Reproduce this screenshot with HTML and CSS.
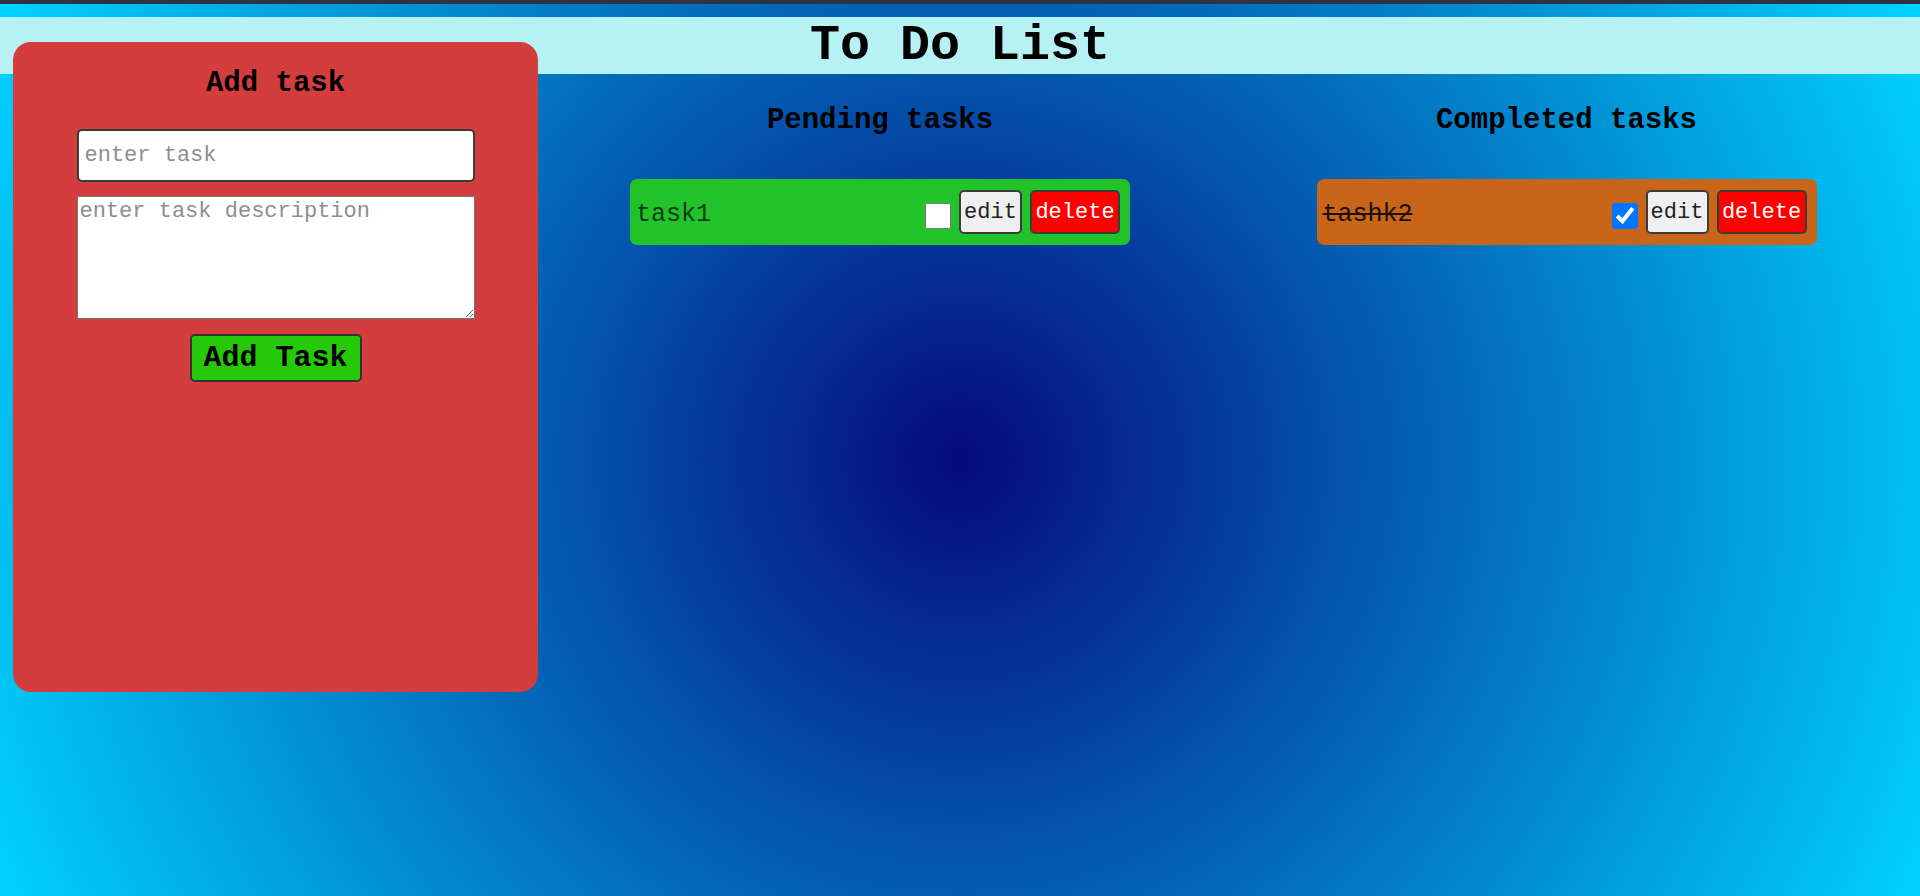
FILE: index.html
```html
<!DOCTYPE html>
<html lang="en">
<head>
<meta charset="utf-8">
<title>To Do List</title>
<link rel="stylesheet" href="styles.css">
</head>
<body>
<div class="topbar"></div>
<div class="app">
  <header class="title-bar">
    <h1 class="title">To Do List</h1>
  </header>
  <main class="board">
    <section class="add-panel">
      <h2 class="panel-title">Add task</h2>
      <input class="task-input" type="text" placeholder="enter task">
      <textarea class="task-desc" placeholder="enter task description"></textarea>
      <button class="add-btn" type="button">Add Task</button>
    </section>
    <section class="column">
      <h2 class="column-title">Pending tasks</h2>
      <div class="task-card pending">
        <span class="task-name">task1</span>
        <input class="task-check" type="checkbox">
        <button class="edit-btn" type="button">edit</button>
        <button class="delete-btn" type="button">delete</button>
      </div>
    </section>
    <section class="column">
      <h2 class="column-title">Completed tasks</h2>
      <div class="task-card completed">
        <span class="task-name done">tashk2</span>
        <input class="task-check" type="checkbox" checked>
        <button class="edit-btn" type="button">edit</button>
        <button class="delete-btn" type="button">delete</button>
      </div>
    </section>
  </main>
</div>
</body>
</html>
```
FILE: styles.css
```css
* { box-sizing: border-box; }

html, body {
  margin: 0;
  padding: 0;
  background: #2e3342;
  font-family: "Courier New", "Liberation Mono", monospace;
  overflow: hidden;
}

.topbar {
  height: 4px;
  background: #2e3342;
}

.app {
  height: 892px;
  padding-top: 13px;
  background: radial-gradient(circle farthest-corner at 960px 456px, #060a7c 0%, #00d4ff 100%);
}

.title-bar {
  height: 57px;
  background: #b6f2f4;
  display: flex;
  align-items: center;
  justify-content: center;
}

.title {
  margin: 0;
  font-size: 50px;
  line-height: 57px;
  font-weight: bold;
  color: #000;
}

.board {
  display: grid;
  grid-template-columns: 525px 684px 1fr;
  padding: 0 9px 0 13px;
  margin-top: -32px;
  position: relative;
}

.add-panel {
  height: 650px;
  background: #d43d3d;
  border-radius: 18px;
  padding-top: 25px;
  display: flex;
  flex-direction: column;
  align-items: center;
}

.panel-title,
.column-title {
  margin: 0;
  font-size: 29px;
  line-height: 33px;
  font-weight: bold;
  color: #000;
  text-align: center;
}

.task-input {
  margin-top: 29px;
  width: 398px;
  height: 53px;
  border: 2px solid #3a3a3a;
  border-radius: 5px;
  padding: 0 6px;
  font-family: inherit;
  font-size: 22px;
  background: #fff;
}

.task-desc {
  margin-top: 14px;
  width: 398px;
  height: 123px;
  border: 1px solid #767676;
  border-radius: 0;
  padding: 2px;
  font-family: inherit;
  font-size: 22px;
  resize: vertical;
  background: #fff;
}

.task-input::placeholder,
.task-desc::placeholder {
  color: #8e8e8e;
}

.add-btn {
  margin-top: 15px;
  width: 172px;
  height: 48px;
  background: #26c80a;
  border: 2px solid #333;
  border-radius: 5px;
  font-family: inherit;
  font-size: 30px;
  font-weight: bold;
  color: #000;
  padding: 0;
}

.column {
  display: flex;
  flex-direction: column;
  align-items: center;
  padding-top: 62px;
}

.task-card {
  margin-top: 42px;
  width: 500px;
  height: 66px;
  border-radius: 7px;
  display: flex;
  align-items: center;
  padding: 0 10px 0 6px;
  gap: 8px;
}

.task-card.pending { background: #22c32a; }
.task-card.completed { background: #c86518; }

.task-name {
  flex: 1;
  font-size: 25px;
  color: #0c3a0c;
  padding-top: 4px;
}

.completed .task-name { color: #1c1006; }

.task-name.done { text-decoration: line-through; }

.task-check {
  width: 26px;
  height: 26px;
  margin: 8px 0 0 0;
}

.edit-btn,
.delete-btn {
  height: 44px;
  border: 2px solid #3c3c3c;
  border-radius: 5px;
  font-family: inherit;
  font-size: 22px;
  padding: 0 3px;
}

.edit-btn {
  width: 63px;
  background: #efefef;
  color: #222;
}

.delete-btn {
  width: 90px;
  background: #ff0000;
  color: #fff;
}
```
